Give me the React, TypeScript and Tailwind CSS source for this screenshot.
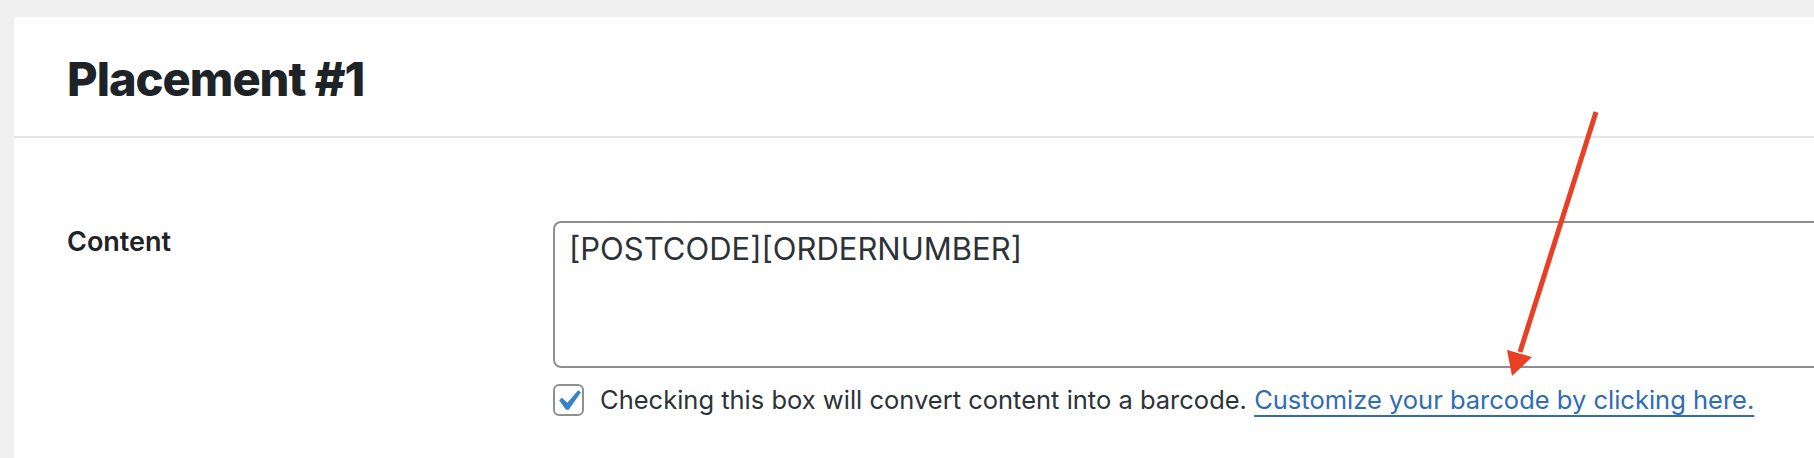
import React from "react";

function CheckBox() {
  return (
    <span className="relative inline-block h-[32px] w-[31px] shrink-0 rounded-[6px] border-2 border-[#8c8f94] bg-white">
      <svg
        viewBox="0 0 20 20"
        className="absolute left-[-8px] top-[-6px] h-[42px] w-[42px]"
        aria-hidden="true"
      >
        <path d="M14.83 4.89l1.34.94-5.81 8.38H9.02L5.78 9.67l1.34-1.25 2.57 2.4z" fill="#3582c4" />
      </svg>
    </span>
  );
}

export default function App() {
  return (
    <div className="relative h-[458px] w-full overflow-hidden bg-[#f0f0f1] pl-[14px] pt-[17px] font-['Inter',sans-serif]">
      <div className="h-full bg-white">
        {/* header */}
        <div className="border-b-2 border-[#e5e5e5] pb-[34px] pl-[53px] pt-[38px]">
          <h2 className="text-[47px] font-extrabold leading-none tracking-[-1px] text-[#1d2327]">Placement #1</h2>
        </div>

        {/* form row */}
        <div className="flex pl-[53px] pt-[83px]">
          <div className="w-[486px] shrink-0 pt-[7px]">
            <label className="text-[27px] font-semibold leading-none text-[#1d2327]">Content</label>
          </div>
          <div className="flex flex-col">
            <textarea
              readOnly
              value="[POSTCODE][ORDERNUMBER]"
              className="h-[147px] w-[1400px] resize-none rounded-[8px] border-2 border-[#8c8f94] bg-white pl-[14px] pt-[10px] text-[31px] leading-none text-[#2c3338] outline-none"
            />
            <div className="mt-[16px] flex items-center gap-[16px]">
              <CheckBox />
              <p className="text-[25.5px] leading-none text-[#2c3338]">
                Checking this box will convert content into a barcode.{" "}
                <a
                  href="#"
                  className="text-[#2f6db3] underline decoration-[1.5px] underline-offset-[6px]"
                >
                  Customize your barcode by clicking here.
                </a>
              </p>
            </div>
          </div>
        </div>
      </div>

      {/* annotation arrow */}
      <svg className="pointer-events-none absolute left-0 top-0" width="1814" height="458" aria-hidden="true">
        <line x1="1596" y1="112" x2="1520" y2="352" stroke="#e94025" strokeWidth="5" />
        <polygon points="1512,376 1507,350 1532,357" fill="#e94025" />
      </svg>
    </div>
  );
}
